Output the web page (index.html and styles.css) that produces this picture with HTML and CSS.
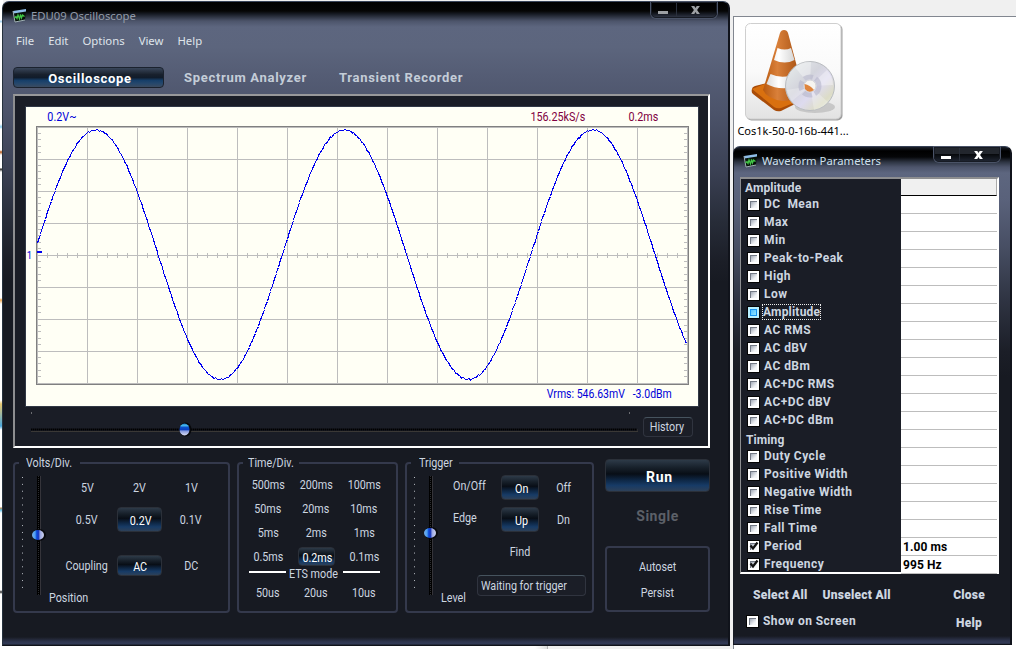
FILE: index.html
```html
<!DOCTYPE html>
<html lang="en">
<head>
<meta charset="utf-8">
<title>EDU09 Oscilloscope</title>
<link rel="stylesheet" href="styles.css">
</head>
<body>
<main class="desktop">
  <div class="explorer">
    <div class="file">
      <svg class="file-icon" width="98" height="98" viewBox="0 0 98 98">
        <defs>
          <linearGradient id="tile" x1="0" y1="0" x2="0" y2="1"><stop offset="0" stop-color="#fff"/><stop offset=".5" stop-color="#fafafa"/><stop offset="1" stop-color="#e2e2e2"/></linearGradient>
          <linearGradient id="orange" x1="0" x2="1"><stop offset="0" stop-color="#b8590f"/><stop offset=".35" stop-color="#d9803a"/><stop offset="1" stop-color="#9e480a"/></linearGradient>
          <linearGradient id="white" x1="0" x2="1"><stop offset="0" stop-color="#dcdcdc"/><stop offset=".35" stop-color="#fff"/><stop offset="1" stop-color="#c4c4c4"/></linearGradient>
          <linearGradient id="disc" x1="0" y1="0" x2="1" y2="1"><stop offset="0" stop-color="#e9efed"/><stop offset=".4" stop-color="#d3d4dc"/><stop offset=".6" stop-color="#dedbef"/><stop offset=".8" stop-color="#dcdcc6"/><stop offset="1" stop-color="#eef3f5"/></linearGradient>
        </defs>
        <rect x="1.5" y="1.5" width="96" height="96" rx="5" fill="#a0a0a0"/>
        <rect x=".5" y=".5" width="95.5" height="95.5" rx="5" fill="url(#tile)" stroke="#cfcfcf"/>
        <ellipse cx="70" cy="84" rx="20" ry="6" fill="#b9b9b9" opacity=".7"/>
        <path d="M7 66Q7 64 10 63L22 60L56 78L36 88Q32 89 29 87L8 71Q6 69 7 66Z" fill="#a94c08"/>
        <path d="M7 66L22 60L56 77L36 85Q32 86 29 84Z" fill="#d9700f"/>
        <path d="M35 10Q36 7 39 7Q42 7 43 10L59 70Q53 78 38 78Q22 76 18 67Z" fill="url(#orange)"/>
        <path d="M32.500 25Q40 28 46 25L49.500 37Q40 42 29 37ZM25.500 51Q38 57 53 50L56.500 62Q36 69 21.500 61Z" fill="url(#white)"/>
        <circle cx="65" cy="63" r="24.500" fill="url(#disc)" stroke="#b9bcc0"/>
        <path d="M65 63L50 44Q58 38 66 39ZM65 63L82 47Q88 55 88 62Z" fill="#fff" opacity=".35"/>
        <path d="M65 63L69 87Q78 85 83 79ZM65 63L42 67Q43 73 47 78Z" fill="#fff" opacity=".25"/>
        <circle cx="65" cy="63" r="9" fill="none" stroke="#b9b8cc" stroke-width="5" opacity=".65" stroke-dasharray="9 3"/>
        <circle cx="65" cy="63" r="6" fill="#f6f4f0" stroke="#d3d3d8"/>
        <path d="M59.500 61Q65 62 69 67Q64 71 60 66Z" fill="#df843c"/>
      </svg>
      <span class="file-name">Cos1k-50-0-16b-441...</span>
    </div>
  </div>
  <div class="left-edge"></div>
  <div class="bottom-edge"></div>

  <section class="window scope">
    <header class="titlebar inactive">
      <svg class="app-icon" width="15" height="15" viewBox="0 0 15 15"><path d="M1 3L14 1L13 12L3 14Z" fill="#07120a"/><path d="M1 3L14 1V3.500L1.500 5.500Z" fill="#8fbdea"/><path d="M1 3L3 14L13 12" fill="none" stroke="#9fb0b4"/><path d="M2.500 10L4 8.500L5 10.500L6 7L7.500 11L8.500 6.500L9.500 10L10.500 7L12.500 8.500" fill="none" stroke="#43c848" stroke-width="1.200"/></svg>
      <h1>EDU09 Oscilloscope</h1>
      <div class="win-buttons"><i class="minimize"></i><i class="close"><svg width="9" height="8" viewBox="0 0 11 10"><path d="M0 0H4L5.500 2.500L7 0H11L7.500 5L11 10H7L5.500 7.500L4 10H0L3.500 5Z" fill="currentColor"/></svg></i></div>
    </header>
    <nav class="menu"><span>File</span><span>Edit</span><span>Options</span><span>View</span><span>Help</span></nav>
    <nav class="tabs"><b class="tab active">Oscilloscope</b><b class="tab spectrum">Spectrum Analyzer</b><b class="tab">Transient Recorder</b></nav>

    <div class="display">
      <div class="screen">
        <div class="readout top"><span class="t volts">0.2V~</span><span class="t rate">156.25kS/s</span><span class="t base">0.2ms</span></div>
        <div class="plot-row"><span class="t channel">1</span><svg id="plot" width="653" height="259" viewBox="0 0 653 259" shape-rendering="crispEdges"></svg></div>
        <div class="readout bottom"><span class="t vrms">Vrms: 546.63mV&nbsp;&nbsp; -3.0dBm</span></div>
      </div>
      <div class="history-row">
        <svg class="hslider" width="612" height="36" viewBox="0 0 612 36"><path d="M5 6h1M603 6h1" stroke="#bbb"/><path d="M5 22.500H611" stroke="#000" stroke-width="2" stroke-dasharray="1.500 .5"/><path d="M5 24.500H612V22" stroke="#3a3836" fill="none"/><ellipse cx="159.500" cy="22.500" rx="6" ry="7" fill="#07080b"/><ellipse cx="158.500" cy="22.500" rx="5" ry="6" fill="url(#ballH)"/></svg>
        <button class="outline history"><span class="t">History</span></button>
      </div>
    </div>

    <div class="controls">
      <fieldset class="group volts-group">
        <legend><span class="t left">Volts/Div.</span></legend>
        <div class="group-body">
          <svg class="vslider" width="47" height="142" viewBox="0 0 47 142"><path d="M8.500 7V118" stroke="#b8bdc4" stroke-dasharray="1 5.870"/><path d="M24.500 6V125" stroke="#000" stroke-width="3"/><path d="M24.500 6V125" stroke="#2b2c30" stroke-dasharray="1 1"/><path d="M26.500 6V125" stroke="#35343a"/><ellipse cx="25" cy="65" rx="7" ry="6" fill="#07080b"/><ellipse cx="24" cy="65" rx="6" ry="5" fill="url(#ballV)"/></svg>
          <div class="volt-grid">
            <span><i class="t">5V</i></span><span><i class="t">2V</i></span><span><i class="t">1V</i></span>
            <span><i class="t">0.5V</i></span><span><b class="glow v"><i class="t">0.2V</i></b></span><span><i class="t">0.1V</i></span>
            <span><i class="t">Coupling</i></span><span><b class="glow ac"><i class="t">AC</i></b></span><span><i class="t">DC</i></span>
            <span class="position"><i class="t left">Position</i></span>
          </div>
        </div>
      </fieldset>
      <fieldset class="group time-group">
        <legend><span class="t left">Time/Div.</span></legend>
        <div class="time-grid">
          <span><i class="t">500ms</i></span><span><i class="t">200ms</i></span><span><i class="t">100ms</i></span>
          <span><i class="t">50ms</i></span><span><i class="t">20ms</i></span><span><i class="t">10ms</i></span>
          <span><i class="t">5ms</i></span><span><i class="t">2ms</i></span><span><i class="t">1ms</i></span>
          <span><i class="t">0.5ms</i></span><span><b class="glow ms"><i class="t">0.2ms</i></b></span><span><i class="t">0.1ms</i></span>
          <div class="ets"><hr><i class="t">ETS mode</i><hr></div>
          <span><i class="t">50us</i></span><span><i class="t">20us</i></span><span><i class="t">10us</i></span>
        </div>
      </fieldset>
      <fieldset class="group trigger-group">
        <legend><span class="t left">Trigger</span></legend>
        <div class="group-body">
          <svg class="vslider" width="47" height="142" viewBox="0 0 47 142"><path d="M8.500 7V118" stroke="#b8bdc4" stroke-dasharray="1 5.870"/><path d="M24.500 6V125" stroke="#000" stroke-width="3"/><path d="M24.500 6V125" stroke="#2b2c30" stroke-dasharray="1 1"/><path d="M26.500 6V125" stroke="#35343a"/><ellipse cx="25" cy="63" rx="7" ry="6" fill="#07080b"/><ellipse cx="24" cy="63" rx="6" ry="5" fill="url(#ballV)"/></svg>
          <div class="trigger-side">
            <div class="trigger-grid">
              <span class="name"><i class="t left">On/Off</i></span><span><b class="glow tr"><i class="t">On</i></b></span><span><i class="t">Off</i></span>
              <span class="name"><i class="t left">Edge</i></span><span><b class="glow tr"><i class="t">Up</i></b></span><span><i class="t">Dn</i></span>
              <span class="find"><i class="t">Find</i></span>
            </div>
            <div class="level-row"><i class="t left level">Level</i><div class="outline status"><i class="t left">Waiting for trigger</i></div></div>
          </div>
        </div>
      </fieldset>
      <div class="actions">
        <b class="glow run">Run</b>
        <b class="single">Single</b>
        <div class="extras"><i class="t">Autoset</i><i class="t">Persist</i></div>
      </div>
    </div>
  </section>

  <section class="window params">
    <header class="titlebar">
      <svg class="app-icon" width="15" height="15" viewBox="0 0 15 15"><path d="M1 3L14 1L13 12L3 14Z" fill="#07120a"/><path d="M1 3L14 1V3.500L1.500 5.500Z" fill="#8fbdea"/><path d="M1 3L3 14L13 12" fill="none" stroke="#9fb0b4"/><path d="M2.500 10L4 8.500L5 10.500L6 7L7.500 11L8.500 6.500L9.500 10L10.500 7L12.500 8.500" fill="none" stroke="#43c848" stroke-width="1.200"/></svg>
      <h1>Waveform Parameters</h1>
      <div class="win-buttons"><i class="minimize"></i><i class="close"><svg width="9" height="8" viewBox="0 0 11 10"><path d="M0 0H4L5.500 2.500L7 0H11L7.500 5L11 10H7L5.500 7.500L4 10H0L3.500 5Z" fill="currentColor"/></svg></i></div>
    </header>
    <div class="param-panel">
      <div class="checks">
        <div class="heading">Amplitude</div>
        <label><i class="box"></i>DC&nbsp; Mean</label>
        <label><i class="box"></i>Max</label>
        <label><i class="box"></i>Min</label>
        <label><i class="box"></i>Peak-to-Peak</label>
        <label><i class="box"></i>High</label>
        <label><i class="box"></i>Low</label>
        <label><i class="box hot"></i><span class="focus">Amplitude</span></label>
        <label><i class="box"></i>AC RMS</label>
        <label><i class="box"></i>AC dBV</label>
        <label><i class="box"></i>AC dBm</label>
        <label><i class="box"></i>AC+DC RMS</label>
        <label><i class="box"></i>AC+DC dBV</label>
        <label><i class="box"></i>AC+DC dBm</label>
        <div class="heading timing">Timing</div>
        <label><i class="box"></i>Duty Cycle</label>
        <label><i class="box"></i>Positive Width</label>
        <label><i class="box"></i>Negative Width</label>
        <label><i class="box"></i>Rise Time</label>
        <label><i class="box"></i>Fall Time</label>
        <label><i class="box on"><svg width="10" height="10" viewBox="0 0 10 10"><path d="M1.500 4.500L4 7.500L8.500 1.500" fill="none" stroke="#111" stroke-width="2.200"/></svg></i>Period</label>
        <label><i class="box on"><svg width="10" height="10" viewBox="0 0 10 10"><path d="M1.500 4.500L4 7.500L8.500 1.500" fill="none" stroke="#111" stroke-width="2.200"/></svg></i>Frequency</label>
      </div>
      <div class="values">
        <div class="head"></div><div></div><div></div><div></div><div></div><div></div><div></div><div></div><div></div><div></div><div></div><div></div><div></div><div></div><div></div><div></div><div></div><div></div><div></div><div></div><div>1.00 ms</div><div>995 Hz</div>
      </div>
    </div>
    <footer class="param-footer">
      <div class="foot-row"><b class="select-all">Select All</b><b>Unselect All</b><b class="end">Close</b></div>
      <div class="foot-row second"><label><i class="box"></i>Show on Screen</label><b class="end">Help</b></div>
    </footer>
  </section>
</main>
<svg class="defs" width="0" height="0">
  <defs>
    <linearGradient id="ballH" x1="0" y1="0" x2="0" y2="1"><stop offset="0" stop-color="#1a7fc4"/><stop offset=".18" stop-color="#48b8f0"/><stop offset=".32" stop-color="#0b50cc"/><stop offset=".52" stop-color="#0a3fc0"/><stop offset=".62" stop-color="#8296dc"/><stop offset="1" stop-color="#dcdff4"/></linearGradient>
    <linearGradient id="ballV"><stop offset="0" stop-color="#7cb0e8"/><stop offset=".25" stop-color="#4ca0f4"/><stop offset=".4" stop-color="#0a45d8"/><stop offset=".55" stop-color="#1d3cc0"/><stop offset=".68" stop-color="#9aa6e4"/><stop offset="1" stop-color="#d2d6ee"/></linearGradient>
  </defs>
</svg>
<script src="plot.js"></script>
</body>
</html>
```
FILE: styles.css
```css
* { box-sizing: border-box; }
body { margin: 0; overflow: hidden; font-family: Roboto, "Liberation Sans", sans-serif; font-size: 12.5px; color: #cdd6e0; }
i { font-style: normal; }
svg { display: block; flex: none; }
.defs { position: absolute; }

.desktop { position: relative; width: 1016px; height: 649px; background: #f0f0f0; overflow: hidden; display: flex; flex-direction: column; align-items: flex-end; }
.explorer { width: 283px; height: 633px; margin-top: 16px; border-top: 1px solid #828790; border-left: 1px solid #828790; background: #fff; }
.file { width: 112px; margin-left: 3px; padding-top: 6px; display: flex; flex-direction: column; align-items: center; }
.file-icon { margin-left: 2px; }
.file-name { margin-top: 1px; font: 11px/18px "Noto Sans", sans-serif; color: #000; white-space: nowrap; }
.left-edge { position: absolute; left: 0; top: 0; width: 3px; height: 646px; background: linear-gradient(#fff 20px, #a9d4f0 21px 22px, #fff 23px 124px, #8fcff0 127px, #fff 129px 150px, #b55b20 152px, #fff 155px 168px, #222 169px, #fff 172px 298px, #f0a850 300px, #fff 304px 400px, #e8c870 404px, #4ca8dc 426px, #fff 430px 507px, #c08b50 508px, #5fc0e8 510px, #fff 513px 590px, #333 592px, #fff 594px); }
.bottom-edge { position: absolute; left: 0; top: 645px; width: 548px; height: 4px; background: linear-gradient(90deg, #fff 535px, #ddd 547px, #888 548px); }

.t { display: inline-block; white-space: nowrap; transform: scaleX(.86); font-weight: 400; font-style: normal; }
.t.left { transform-origin: left center; }

.window { position: absolute; border: 1px solid #1d222d; border-radius: 7px 7px 0 0; display: flex; flex-direction: column; }
.scope { left: 2px; top: 1px; width: 728px; height: 645px; padding: 0 10px;
  border-width: 1px 2px 1px 1px; border-color: #39455a #10131b #10131b #26323e;
  background: linear-gradient(#000 0, #050505 9px, #171b24 12px, #4c546a 19px, #5d667f 25px, #5c657d 45px, #545c74 75px, #4c536a 110px, #3a4053 170px, #272c38 220px, #1b1e27 260px, #171a22 280px, #171a22 635px, #2f3650 640px, #323a56 642px, #161922 643px); }
.params { left: 733px; top: 146px; width: 279px; height: 499px; padding: 0 12px 0 6px;
  border-color: #354055 #10131b #10131b #171b24; border-right-width: 2px;
  background: linear-gradient(#1b202b 0, #000 4px, #050608 10px, #2d3442 15px, #4c546a 20px, #5d667f 26px, #59617a 55px, #474e63 100px, #303544 150px, #1b1e27 205px, #171a22 230px, #171a22 489px, #2f3650 494px, #323a56 496px, #161922 498px); }

.titlebar { display: flex; align-items: flex-start; height: 28px; color: #cfe0ee; }
.titlebar h1 { margin: 6px 0 0 4px; font: 11.3px/16px "Noto Sans", sans-serif; letter-spacing: 0; }
.titlebar.inactive { color: #929ba9; }
.app-icon { margin-top: 6px; }
.scope .app-icon { margin-left: -1px; }
.params .app-icon { margin-left: 3px; }
.win-buttons { display: flex; width: 66px; height: 16px; margin-left: auto; border: 1px solid #171b24; border-radius: 0 0 5px 5px; box-shadow: 0 0 0 1px #4a5367; }
.scope .win-buttons { margin-right: 1px; }
.win-buttons i { display: flex; align-items: center; justify-content: center; color: #9da0a3; }
.minimize { width: 25px; border-right: 1px solid #2a303c; }
.minimize::before { content: ""; width: 10px; height: 3px; margin: 5px 3px 0 0; background: currentColor; }
.close { flex: 1; padding-right: 3px; }
.params .win-buttons { height: 15px; margin-right: -2px; background: linear-gradient(#22262d 45%, #07090c 48%, #1e2430); }
.params .win-buttons i { color: #fff; }

.menu { display: flex; height: 22px; gap: 14px; padding-left: 3px; font: 11.35px/21px "Noto Sans", sans-serif; color: #dfe4ea; }
.tabs { display: flex; align-items: center; height: 22px; margin-top: 14px; font-size: 13px; letter-spacing: .7px; color: #c4cdd8; }
.tab.active { width: 151px; height: 21px; line-height: 21px; padding-left: 3px; text-align: center; color: #fff; border: 1px solid #1b222e; border-radius: 4px; background: linear-gradient(#39465a, #18202c 35%, #111c2b 50%, #163e68 65%, #24476c 80%, #3b4b60); }
.spectrum { margin: 0 32px 0 20px; }

.display { width: 697px; height: 354px; margin-top: 6px; padding: 11px 11px 0; border: 2px solid #fff; border-top-color: #98989a; border-left-color: #8d8e90; background: #1a1d26; }
.screen { width: 672px; height: 299px; background: #fffff5; display: flex; flex-direction: column; box-shadow: 0 0 0 1px #313845; }
.readout { display: flex; line-height: 20px; height: 19px; }
.volts { margin-left: 19px; color: #0000d8; }
.rate { margin-left: auto; color: #800040; }
.base { margin: 0 37px 0 36px; color: #800040; }
.plot-row { display: flex; align-items: center; }
.channel { width: 10px; color: #0000d8; font-size: 11px; }
.readout.bottom { line-height: 17px; }
.vrms { margin: 0 26px 0 auto; color: #0000d8; transform: scaleX(.84); transform-origin: right center; }
.history-row { display: flex; align-items: flex-start; }
.hslider { margin-top: 1px; }
.outline { border: 1px solid #30343f; border-top-color: #46535e; border-radius: 4px; background: #1b1e27; color: #cdd6e0; font: inherit; }
.history { width: 50px; height: 20px; margin: 11px 0 0 5px; padding: 0; line-height: 18px; text-align: center; }
.history .t { margin-left: -3px; }

.controls { display: flex; gap: 7px; margin-top: 8px; }
.group { min-width: 0; height: 157px; margin: 0; padding: 0; border: 2px solid #34394c; border-radius: 4px; }
.group legend { height: 14px; line-height: 14px; margin-left: 4px; padding: 0 0 0 7px; }
.volts-group { width: 217px; }
.time-group { width: 161px; }
.trigger-group { width: 189px; }
.volts-group legend { width: 61px; }
.time-group legend { width: 56px; margin-left: 4px; padding-left: 5px; }
.trigger-group legend { width: 48px; padding-left: 8px; }
.group-body { display: flex; height: 141px; }
.vslider { margin-left: -1px; }
.volt-grid { display: grid; grid-template-columns: repeat(3, 52px); grid-template-rows: 32px 32px 60px 4px; padding-top: 1px; }
.volt-grid > span, .time-grid > span, .trigger-grid > span { display: flex; align-items: center; justify-content: center; }
.volt-grid > .position { grid-column: span 3; justify-content: flex-start; margin-left: -12px; }
.glow { display: flex; align-items: center; justify-content: center; color: #fff; border: 1px solid #2b3039; border-radius: 4px; background: linear-gradient(#2d3a48, #17202a 25%, #080e16 45%, #0e2745 65%, #173b66 82%, #2d4058); }
.glow.v { width: 45px; height: 25px; padding: 2px 0 0 3px; }
.glow.ac { width: 45px; height: 21px; padding: 2px 0 0 3px; }
.glow.ms { width: 37px; height: 19px; padding: 2px 0 0 2px; }
.glow.tr { width: 38px; height: 25px; padding: 3px 0 0 4px; }
.time-grid { display: grid; grid-template-columns: repeat(3, 48px); grid-template-rows: repeat(4, 24px) 12px 24px; padding: 2px 0 0 5px; }
.ets { grid-column: span 3; display: flex; align-items: center; justify-content: flex-start; padding-left: 5px; }
.ets hr { width: 37px; height: 2px; margin: 0; border: 0; background: #fff; transform: translateY(-2px); }
.ets .t { margin: -2px 1px 0 -1px; }
.trigger-side { display: flex; flex-direction: column; }
.trigger-grid { display: grid; grid-template-columns: 45px 43px 46px; grid-template-rows: 32px 32px 32px; padding-top: 1px; }
.trigger-grid > .name { justify-content: flex-start; padding-bottom: 4px; }
.trigger-grid > .find { grid-column: 2; }
.level-row { display: flex; margin: 8px 0 0 -12px; }
.level { width: 36px; padding-top: 15px; }
.status { width: 109px; height: 21px; padding-left: 3px; line-height: 20px; }
.actions { width: 105px; margin-left: 4px; padding-top: 3px; display: flex; flex-direction: column; }
.glow.run { height: 33px; padding: 2px 0 0 4px; font-size: 14px; letter-spacing: .7px; }
.single { height: 54px; padding-bottom: 7px; display: flex; align-items: center; justify-content: center; font-size: 14px; letter-spacing: .5px; color: #5c6068; }
.extras { height: 66px; padding: 5px 0; border: 2px solid #34394c; border-radius: 4px; display: flex; flex-direction: column; align-items: center; justify-content: space-around; }

.params { font-size: 12px; font-weight: 700; letter-spacing: .45px; }
.param-panel { display: flex; width: 259px; height: 397px; margin-top: 2px; border: 1px solid #fff; border-top: 2px solid #8d8e90; border-left-color: #8d8e90; border-right-width: 2px; border-bottom-width: 2px; background: #1a1d26; }
.checks { width: 160px; padding-left: 6px; }
.heading { height: 16px; line-height: 18px; margin-left: -2px; letter-spacing: .1px; }
.heading.timing { height: 18px; line-height: 22px; margin-left: -1px; }
.checks label { display: flex; align-items: center; height: 18px; gap: 5px; line-height: 18px; }
.box { flex: none; width: 11px; height: 11px; margin: 0 0 0 1px; border: 2px solid #fff; outline: 1px solid #050505; background: linear-gradient(135deg, #8f98a8, #f4f6f8 75%); box-shadow: inset 1px 1px #737985; }
.box.hot { border-color: #b8f0ff; background: linear-gradient(135deg, #48b8ff, #9aeeff); box-shadow: inset 0 0 0 1px #1593ef; }
.box.on svg { margin: -2px 0 0 -1px; }
.focus { height: 14px; line-height: 14px; margin-left: -1px; letter-spacing: .2px; outline: 1px dotted #eee; }
.values { width: 96px; background: #fff; color: #000; }
.values div { height: 18px; line-height: 18px; padding-left: 2px; border-bottom: 1px solid #bdbdbd; letter-spacing: .1px; }
.values .head { height: 17px; background: #f0f0f0; border-bottom: 1px solid #000; border-right: 1px solid #aaa; }
.param-footer { padding: 12px 13px 0 13px; letter-spacing: .25px; }
.foot-row { display: flex; align-items: center; height: 18px; gap: 15px; }
.foot-row .end { margin-left: auto; }
.foot-row label { display: flex; align-items: center; gap: 5px; margin-left: -7px; letter-spacing: .45px; }
.foot-row.second { margin-top: 8px; }
.foot-row.second .end { padding: 3px 3px 0 0; }
```
FILE: plot.js
```js
const plot = document.getElementById("plot");
const GRID = "#bdbdbd";

function path(d, stroke, width = 1) {
  const p = document.createElementNS("http://www.w3.org/2000/svg", "path");
  p.setAttribute("d", d);
  p.setAttribute("stroke", stroke);
  p.setAttribute("stroke-width", width);
  p.setAttribute("fill", "none");
  plot.append(p);
}

// Grid divisions with minor ticks on the edges and centre line
let grid = "M1.5 1V258M1 1.5H652M651.5 1V258M1 257.5H652";
for (let i = 1; i <= 12; i++) grid += `M${i * 50 + 1.5} 1V258`;
for (let j = 1; j < 8; j++) grid += `M1 ${j * 32 + 1.5}H652`;
for (let x = 11.5; x < 650; x += 10) grid += `M${x} 127V132`;
for (let j = 1; j < 40; j++) {
  const y = Math.floor(j * 6.4 + 1) + 0.5;
  grid += `M1 ${y}H5M648 ${y}H652`;
}
path(grid, GRID);
path("M.5 .5H652.5V258.5H.5Z", "#808080");

// Sampled trace
let wave = "";
for (let x = 2; x <= 651; x++) {
  const noise = Math.sin(x * 1.7) * Math.sin(x * 0.43) * 0.9;
  const y = Math.round(128.2 - 124.7 * Math.cos((x - 60.5) * 2 * Math.PI / 248.5) + noise) + 0.5;
  wave += `${wave ? "L" : "M"}${x - 0.5} ${y}`;
}
path(wave, "#0000f0");
path("M1 126H6", "#0000f0", 2);
```
